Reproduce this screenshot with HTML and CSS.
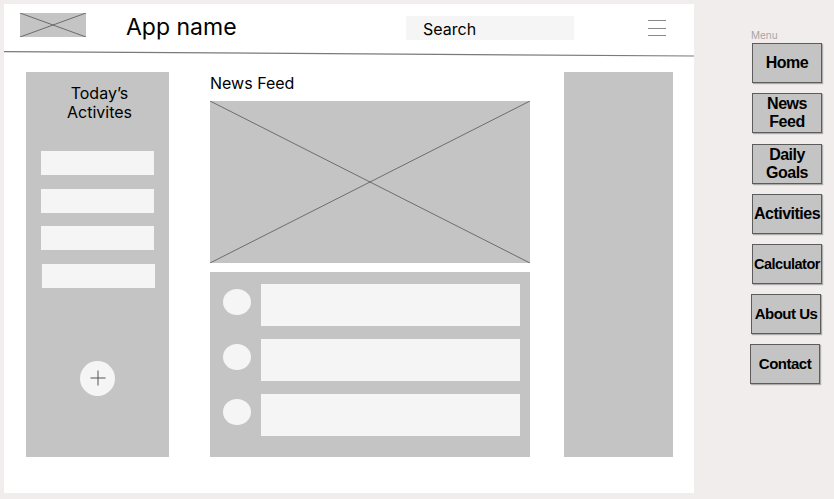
FILE: index.html
```html
<!DOCTYPE html>
<html lang="en">
<head>
<meta charset="utf-8">
<title>App wireframe</title>
<link rel="stylesheet" href="styles.css">
</head>
<body>
<div class="page">
  <div class="frame">
    <header class="header">
      <svg class="logo" viewBox="0 0 66 24" width="66" height="24">
        <rect x="0" y="0" width="66" height="24" fill="#c4c4c4"/>
        <line x1="0" y1="0" x2="66" y2="24" stroke="#555" stroke-width="0.8"/>
        <line x1="0" y1="24" x2="66" y2="0" stroke="#555" stroke-width="0.8"/>
      </svg>
      <h1 class="app-name">App name</h1>
      <div class="search">Search</div>
      <div class="burger"><span></span><span></span><span></span></div>
    </header>
    <svg class="divider" viewBox="0 0 690 6" width="690" height="6">
      <line x1="0" y1="0.6" x2="690" y2="5" stroke="#7a7a7a" stroke-width="1.2"/>
    </svg>
    <main class="content">
      <section class="activities">
        <h2 class="panel-title">Today’s<br>Activites</h2>
        <div class="inputs">
          <div class="input"></div>
          <div class="input"></div>
          <div class="input"></div>
          <div class="input input-shift"></div>
        </div>
        <div class="add">
          <svg viewBox="0 0 16 16" width="16" height="16">
            <line x1="8" y1="0.5" x2="8" y2="15.5" stroke="#555" stroke-width="1"/>
            <line x1="0.5" y1="8" x2="15.5" y2="8" stroke="#555" stroke-width="1"/>
          </svg>
        </div>
      </section>
      <section class="feed">
        <h2 class="feed-title">News Feed</h2>
        <svg class="hero" viewBox="0 0 320 162" width="320" height="162">
          <rect x="0" y="0" width="320" height="162" fill="#c4c4c4"/>
          <line x1="0" y1="0" x2="320" y2="162" stroke="#333" stroke-width="0.6"/>
          <line x1="0" y1="162" x2="320" y2="0" stroke="#333" stroke-width="0.6"/>
        </svg>
        <div class="list">
          <div class="row"><div class="dot"></div><div class="bar"></div></div>
          <div class="row"><div class="dot"></div><div class="bar"></div></div>
          <div class="row"><div class="dot"></div><div class="bar"></div></div>
        </div>
      </section>
      <aside class="side"></aside>
    </main>
  </div>
  <nav class="menu">
    <div class="menu-label">Menu</div>
    <div class="btn">Home</div>
    <div class="btn">News<br>Feed</div>
    <div class="btn">Daily<br>Goals</div>
    <div class="btn">Activities</div>
    <div class="btn btn-calc">Calculator</div>
    <div class="btn btn-about">About Us</div>
    <div class="btn btn-contact">Contact</div>
  </nav>
</div>
</body>
</html>
```

FILE: styles.css
```css
* { box-sizing: border-box; }

html, body {
  margin: 0;
  padding: 0;
}

body {
  background: #f2eded;
  font-family: Inter, "Noto Sans", sans-serif;
  color: #000;
  width: 834px;
  height: 499px;
  overflow: hidden;
}

.page {
  display: flex;
  align-items: flex-start;
  padding: 4px 0 0 4px;
}

.frame {
  width: 690px;
  height: 489px;
  background: #fff;
  flex: none;
}

.header {
  display: flex;
  align-items: flex-start;
  height: 47px;
}

.logo {
  display: block;
  margin: 9px 0 0 16px;
  flex: none;
}

.app-name {
  margin: 9px 0 0 40px;
  font-size: 23px;
  font-weight: 400;
  line-height: 28px;
}

.search {
  margin: 12px 0 0 auto;
  width: 168px;
  height: 24px;
  padding: 1px 0 0 17px;
  line-height: 24px;
  font-size: 16px;
  background: #f5f5f5;
}

.burger {
  margin: 16px 28px 0 74px;
  width: 18px;
  display: flex;
  flex-direction: column;
  gap: 6.5px;
}

.burger span {
  display: block;
  height: 1px;
  background: #8a8a8a;
}

.divider {
  display: block;
}

.content {
  display: flex;
  align-items: flex-start;
  padding: 15px 0 0 22px;
}

.activities {
  width: 143px;
  height: 385px;
  background: #c4c4c4;
  margin-right: 41px;
  padding-top: 12px;
  flex: none;
}

.panel-title {
  margin: 0;
  padding-left: 4px;
  font-size: 16px;
  font-weight: 400;
  line-height: 19px;
  text-align: center;
}

.inputs {
  margin-top: 29px;
  display: flex;
  flex-direction: column;
  gap: 13.5px;
}

.input {
  margin-left: 15px;
  width: 113px;
  height: 24px;
  background: #f5f5f5;
}

.input-shift {
  margin-left: 16px;
}

.add {
  margin: 73px 0 0 54px;
  width: 35px;
  height: 35px;
  border-radius: 50%;
  background: #f5f5f5;
  display: flex;
  align-items: center;
  justify-content: center;
}

.add svg { display: block; }

.feed {
  width: 320px;
  margin-right: 34px;
  flex: none;
}

.feed-title {
  margin: 2px 0 0 0;
  font-size: 16px;
  font-weight: 400;
  line-height: 19px;
}

.hero {
  display: block;
  margin-top: 8px;
}

.list {
  margin-top: 9px;
  height: 185px;
  background: #c4c4c4;
  padding: 12px 10px 0 13px;
  display: flex;
  flex-direction: column;
  gap: 13px;
}

.row {
  display: flex;
  align-items: flex-start;
  gap: 10px;
}

.dot {
  margin-top: 5px;
  width: 28px;
  height: 26px;
  border-radius: 50%;
  background: #f5f5f5;
  flex: none;
}

.bar {
  flex: 1;
  height: 42px;
  background: #f5f5f5;
}

.side {
  width: 109px;
  height: 385px;
  background: #c4c4c4;
  flex: none;
}

.menu {
  margin-left: 58px;
  padding-top: 25px;
  display: flex;
  flex-direction: column;
  gap: 10.2px;
}

.menu-label {
  margin: 0 0 -8px -1px;
  font-size: 10px;
  line-height: 12px;
  color: #a9a5a5;
}

.btn {
  width: 70px;
  height: 40px;
  border: 1px solid #5c5c5c;
  background: #c4c4c4;
  box-shadow: 1px 1px 1px rgba(0, 0, 0, 0.28);
  display: flex;
  align-items: center;
  justify-content: center;
  text-align: center;
  font-family: "Liberation Sans", Arial, sans-serif;
  font-weight: 700;
  font-size: 16px;
  letter-spacing: -0.5px;
  line-height: 18px;
  white-space: nowrap;
}

.btn-calc {
  font-size: 14.5px;
  letter-spacing: -0.5px;
}

.btn-about {
  margin-left: -1px;
  font-size: 15px;
}

.btn-contact {
  margin-left: -2px;
  font-size: 15px;
}
```
